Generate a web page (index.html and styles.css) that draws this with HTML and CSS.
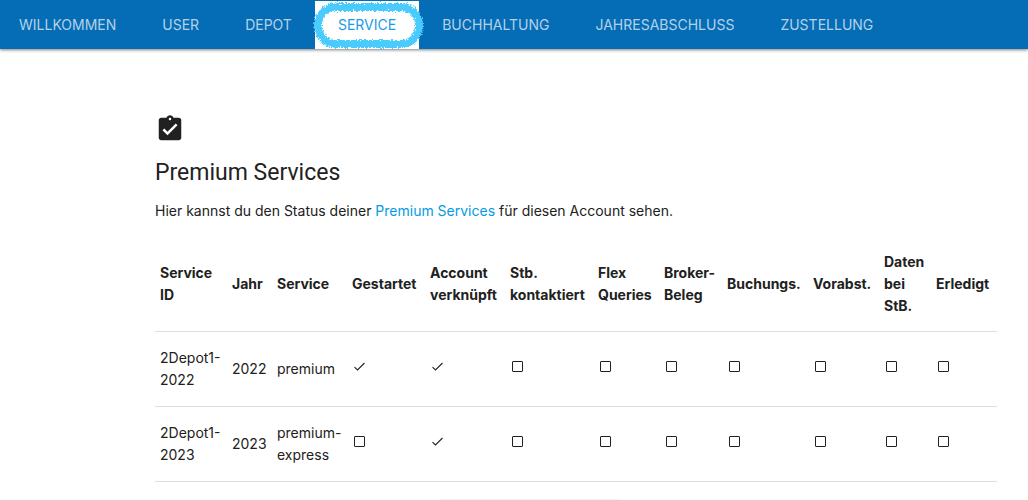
FILE: index.html
```html
<!DOCTYPE html>
<html lang="de">
<head>
    <meta charset="UTF-8">
    <meta name="viewport" content="width=device-width, initial-scale=1">
    <title>Premium Services</title>
    <link rel="stylesheet" href="styles.css">
</head>

<body>
    <nav class="navbar">
        <ul class="tabs">
            <li><a href="#willkommen">WILLKOMMEN</a></li>
            <li><a href="#user">USER</a></li>
            <li><a href="#depot">DEPOT</a></li>
            <li class="active">
                <a href="#service">SERVICE</a>
                <svg class="marker" viewBox="0 0 112 48" aria-hidden="true">
                    <filter id="chalk" x="-10%" y="-20%" width="120%" height="140%">
                        <feTurbulence type="fractalNoise" baseFrequency="0.6" numOctaves="2" seed="4" />
                        <feDisplacementMap in="SourceGraphic" scale="6" xChannelSelector="R" yChannelSelector="G" />
                    </filter>
                    <rect x="6" y="6" width="101" height="37" rx="18" filter="url(#chalk)" />
                </svg>
            </li>
            <li><a href="#buchhaltung">BUCHHALTUNG</a></li>
            <li><a href="#jahresabschluss">JAHRESABSCHLUSS</a></li>
            <li><a href="#zustellung">ZUSTELLUNG</a></li>
        </ul>
    </nav>

    <main class="content">
        <svg class="page-icon" viewBox="0 0 24 24" aria-hidden="true">
            <path d="M19 3h-4.180C14.400 1.840 13.300 1 12 1c-1.300 0-2.400.840-2.820 2H5c-1.100 0-2 .900-2 2v14c0 1.100.900 2 2 2h14c1.100 0 2-.900 2-2V5c0-1.100-.900-2-2-2zm-7 0c.550 0 1 .450 1 1s-.450 1-1 1-1-.450-1-1 .450-1 1-1zm-2 14l-4-4 1.410-1.410L10 14.170l6.590-6.590L18 9l-8 8z" />
        </svg>
        <h1>Premium Services</h1>
        <p>Hier kannst du den Status deiner <a href="#premium">Premium Services</a> für diesen Account sehen.</p>

        <table class="services">
            <colgroup>
                <col class="col-id">
                <col class="col-year">
                <col class="col-service">
                <col class="col-started">
                <col class="col-account">
                <col class="col-contacted">
                <col class="col-flex">
                <col class="col-broker">
                <col class="col-booking">
                <col class="col-draft">
                <col class="col-data">
                <col class="col-done">
            </colgroup>
            <thead>
                <tr>
                    <th>Service ID</th>
                    <th>Jahr</th>
                    <th>Service</th>
                    <th>Gestartet</th>
                    <th>Account verknüpft</th>
                    <th>Stb. kontaktiert</th>
                    <th>Flex Queries</th>
                    <th>Broker-<br>Beleg</th>
                    <th>Buchungs.</th>
                    <th>Vorabst.</th>
                    <th>Daten<br>bei<br>StB.</th>
                    <th>Erledigt</th>
                </tr>
            </thead>
            <tbody>
                <tr>
                    <td>2Depot1-<br>2022</td>
                    <td>2022</td>
                    <td>premium</td>
                    <td><input type="checkbox" aria-label="Gestartet" checked disabled></td>
                    <td><input type="checkbox" aria-label="Account verknüpft" checked disabled></td>
                    <td><input type="checkbox" aria-label="Stb. kontaktiert" disabled></td>
                    <td><input type="checkbox" aria-label="Flex Queries" disabled></td>
                    <td><input type="checkbox" aria-label="Broker-Beleg" disabled></td>
                    <td><input type="checkbox" aria-label="Buchungs." disabled></td>
                    <td><input type="checkbox" aria-label="Vorabst." disabled></td>
                    <td><input type="checkbox" aria-label="Daten bei StB." disabled></td>
                    <td><input type="checkbox" aria-label="Erledigt" disabled></td>
                </tr>
                <tr>
                    <td>2Depot1-<br>2023</td>
                    <td>2023</td>
                    <td>premium-<br>express</td>
                    <td><input type="checkbox" aria-label="Gestartet" disabled></td>
                    <td><input type="checkbox" aria-label="Account verknüpft" checked disabled></td>
                    <td><input type="checkbox" aria-label="Stb. kontaktiert" disabled></td>
                    <td><input type="checkbox" aria-label="Flex Queries" disabled></td>
                    <td><input type="checkbox" aria-label="Broker-Beleg" disabled></td>
                    <td><input type="checkbox" aria-label="Buchungs." disabled></td>
                    <td><input type="checkbox" aria-label="Vorabst." disabled></td>
                    <td><input type="checkbox" aria-label="Daten bei StB." disabled></td>
                    <td><input type="checkbox" aria-label="Erledigt" disabled></td>
                </tr>
            </tbody>
        </table>
        <div class="card-edge"></div>
    </main>
</body>
</html>
```
FILE: styles.css
```css
* {
    box-sizing: border-box;
    margin: 0;
    padding: 0;
}

body {
    background-color: #fff;
    font-family: Inter, Roboto, sans-serif;
    font-size: 14px;
    line-height: 22px;
    color: #212121;
}

a {
    color: #039be5;
    text-decoration: none;
}

.navbar {
    background-color: #056cb6;
    height: 49px;
    padding-top: 1px;
    box-shadow: 0 1px 3px rgba(0, 0, 0, 0.5);
}

.tabs {
    display: flex;
    list-style: none;
    white-space: nowrap;
}

.tabs li {
    position: relative;
}

.tabs a {
    display: block;
    padding: 0 23px;
    line-height: 48px;
    color: rgba(255, 255, 255, 0.7);
}

.tabs li:first-child a {
    padding-left: 19px;
}

.tabs .active a {
    background-color: #fff;
    color: #1b9be8;
}

/* hand-drawn ring around the open tab */
.marker {
    position: absolute;
    top: 0;
    left: -3px;
    width: 112px;
    height: 48px;
    overflow: visible;
    pointer-events: none;
}

.marker rect {
    fill: none;
    stroke: #48ccfd;
    stroke-width: 8;
}

.content {
    padding: 65px 31px 0 155px;
}

.page-icon {
    display: block;
    width: 30px;
    height: 30px;
    fill: #212121;
}

h1 {
    margin: 13px 0 11px;
    font-family: Roboto, Inter, sans-serif;
    font-size: 23px;
    font-weight: 400;
    line-height: 32px;
}

.services {
    width: 100%;
    margin-top: 14px;
    border-collapse: collapse;
    table-layout: fixed;
}

.services tr {
    border-bottom: 1px solid #dedede;
}

.services th,
.services td {
    padding: 15px 5px;
    text-align: left;
    vertical-align: middle;
}

.services th {
    font-weight: 700;
    padding-bottom: 14px;
}

.col-id { width: 72px; }
.col-year { width: 45px; }
.col-service { width: 75px; }
.col-started { width: 78px; }
.col-account { width: 80px; }
.col-contacted { width: 88px; }
.col-flex { width: 66px; }
.col-broker { width: 63px; }
.col-booking { width: 86px; }
.col-draft { width: 71px; }
.col-data { width: 52px; }
.col-done { width: 66px; }

.services input {
    appearance: none;
    display: block;
    width: 11px;
    height: 11px;
    margin: 0 0 6px 2px;
    border: 1px solid #212121;
    border-radius: 1px;
}

.services input:checked {
    border: none;
    background: url("data:image/svg+xml,%3Csvg xmlns='http://www.w3.org/2000/svg' viewBox='0 0 11 11'%3E%3Cpath d='M.5 6.200L3.500 9 10.500 2' fill='none' stroke='%23212121' stroke-width='1.100'/%3E%3C/svg%3E");
}

.card-edge {
    width: 180px;
    height: 1px;
    margin: 17px auto 0 285px;
    background-color: #f5f5f5;
}
```
